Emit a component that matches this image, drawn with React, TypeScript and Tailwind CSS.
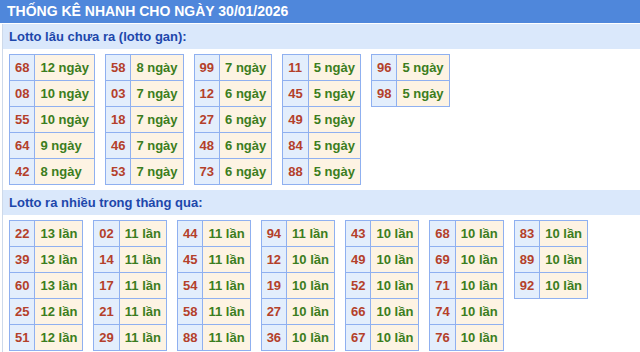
const gan: [string, string][][] = [
  [["68", "12"], ["08", "10"], ["55", "10"], ["64", "9"], ["42", "8"]],
  [["58", "8"], ["03", "7"], ["18", "7"], ["46", "7"], ["53", "7"]],
  [["99", "7"], ["12", "6"], ["27", "6"], ["48", "6"], ["73", "6"]],
  [["11", "5"], ["45", "5"], ["49", "5"], ["84", "5"], ["88", "5"]],
  [["96", "5"], ["98", "5"]],
];

const nhieu: [string, string][][] = [
  [["22", "13"], ["39", "13"], ["60", "13"], ["25", "12"], ["51", "12"]],
  [["02", "11"], ["14", "11"], ["17", "11"], ["21", "11"], ["29", "11"]],
  [["44", "11"], ["45", "11"], ["54", "11"], ["58", "11"], ["88", "11"]],
  [["94", "11"], ["12", "10"], ["19", "10"], ["27", "10"], ["36", "10"]],
  [["43", "10"], ["49", "10"], ["52", "10"], ["66", "10"], ["67", "10"]],
  [["68", "10"], ["69", "10"], ["71", "10"], ["74", "10"], ["76", "10"]],
  [["83", "10"], ["89", "10"], ["92", "10"]],
];

function LottoTable({ rows, unit }: { rows: [string, string][]; unit: string }) {
  return (
    <table className="border-collapse self-start">
      <tbody>
        {rows.map(([num, count], i) => (
          <tr key={i}>
            <td className="h-[26px] border border-[#8fb0f0] bg-[#e3eefc] px-[5px] py-0 text-[#b4402a]">
              {num}
            </td>
            <td className="h-[26px] border border-[#8fb0f0] bg-[#fdf3e3] px-[5px] py-0 text-[#3b7d20]">
              {count} {unit}
            </td>
          </tr>
        ))}
      </tbody>
    </table>
  );
}

function Section({ title, tables, unit }: { title: string; tables: [string, string][][]; unit: string }) {
  return (
    <div>
      <div className="flex h-[25px] items-center bg-[#dae8fb] pl-[6px] text-[13px] font-bold text-[#1d47ab]">
        {title}
      </div>
      <div className="flex gap-[10px] pl-[6px] pt-[5px] pb-[5px]">
        {tables.map((t, i) => (
          <LottoTable key={i} rows={t} unit={unit} />
        ))}
      </div>
    </div>
  );
}

export default function App() {
  return (
    <div className="h-[352px] w-[640px] overflow-hidden bg-white font-['Liberation_Sans',Arial,sans-serif] text-[13px] font-bold">
      <div className="flex h-[23px] items-center bg-[#4f87db] pl-[7px] text-[14px] text-white">
        THỐNG KÊ NHANH CHO NGÀY 30/01/2026
      </div>
      <div className="ml-[2px] mt-[1px] border-l border-[#cdd9ea]">
        <Section title="Lotto lâu chưa ra (lotto gan):" tables={gan} unit="ngày" />
        <Section title="Lotto ra nhiều trong tháng qua:" tables={nhieu} unit="lần" />
      </div>
    </div>
  );
}
